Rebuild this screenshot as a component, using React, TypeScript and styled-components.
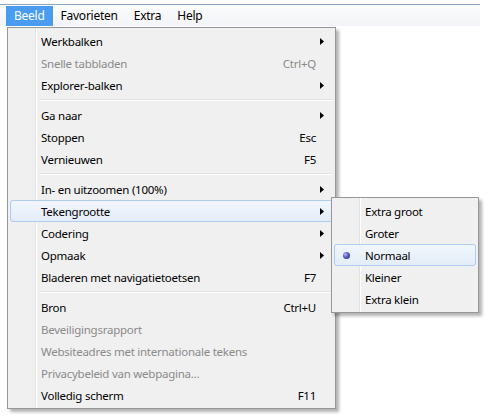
import React from 'react';
import styled, { createGlobalStyle, css } from 'styled-components';

const GlobalStyle = createGlobalStyle`
  html, body {
    margin: 0;
    padding: 0;
    background: #ffffff;
  }
  body {
    font-family: "Noto Sans", "Liberation Sans", sans-serif;
    font-size: 11.5px;
    letter-spacing: -0.25px;
    color: #000;
  }
`;

const Page = styled.div`
  position: relative;
  width: 488px;
  height: 420px;
  overflow: hidden;
  background: #fff;
  padding-top: 4px;
  box-sizing: border-box;
`;

const MenuBar = styled.div`
  display: flex;
  align-items: flex-end;
  width: 480px;
  height: 22px;
  box-sizing: border-box;
  padding-left: 6px;
  border-top: 1px solid #8ea6c4;
  background: linear-gradient(to bottom, #fbfcfd 0%, #f2f4f7 100%);
`;

const MenuTitle = styled.div<{ $active?: boolean }>`
  height: 20px;
  line-height: 20px;
  padding: 0 8px;
  font-size: 12px;
  color: #000;
  ${(p) =>
    p.$active &&
    css`
      background: #4a9cf0;
      color: #fff;
    `}
`;

const Dropdown = styled.div<{ $left: number; $top: number; $width: number }>`
  position: absolute;
  left: ${(p) => p.$left}px;
  top: ${(p) => p.$top}px;
  width: ${(p) => p.$width}px;
  box-sizing: border-box;
  padding: 2px;
  border: 1px solid #979797;
  background-color: #f0f0f0;
  background-image: linear-gradient(
    to right,
    transparent 27px,
    #e2e3e3 27px,
    #e2e3e3 28px,
    #ffffff 28px,
    #ffffff 29px,
    transparent 29px
  );
  box-shadow: 3px 3px 3px rgba(0, 0, 0, 0.3);
`;

const Row = styled.div<{ $disabled?: boolean; $hot?: boolean }>`
  display: grid;
  grid-template-columns: 30px 1fr auto 16px;
  align-items: center;
  height: 22px;
  box-sizing: border-box;
  border: 1px solid transparent;
  border-radius: 3px;
  color: ${(p) => (p.$disabled ? '#8a8a8a' : '#000')};
  white-space: nowrap;
  ${(p) =>
    p.$hot &&
    css`
      border-color: #aecbf0;
      background: linear-gradient(to bottom, #f1f6fc 0%, #e3ecf8 100%);
    `}
`;

const Gutter = styled.span`
  display: flex;
  align-items: center;
  padding-left: 8px;
`;

const Shortcut = styled.span`
  text-align: right;
`;

const ArrowCell = styled.span`
  display: flex;
  align-items: center;
  padding-left: 4px;
`;

const Separator = styled.div`
  height: 8px;
  margin-left: 30px;
  display: flex;
  align-items: center;
  &::before {
    content: '';
    flex: 1;
    height: 1px;
    background: #e2e3e3;
    border-bottom: 1px solid #ffffff;
  }
`;

const RadioDot = styled.span`
  width: 7px;
  height: 7px;
  border-radius: 50%;
  background: radial-gradient(circle at 35% 35%, #b9bdf0 0%, #5458c4 45%, #262a8a 100%);
`;

const Arrow = () => (
  <svg width="4" height="7" viewBox="0 0 4 7">
    <path d="M0 0 L4 3.5 L0 7 Z" fill="#000" />
  </svg>
);

type Item =
  | { sep: true }
  | {
      sep?: false;
      label: string;
      shortcut?: string;
      sub?: boolean;
      disabled?: boolean;
      hot?: boolean;
      radio?: boolean;
    };

const mainItems: Item[] = [
  { label: 'Werkbalken', sub: true },
  { label: 'Snelle tabbladen', shortcut: 'Ctrl+Q', disabled: true },
  { label: 'Explorer-balken', sub: true },
  { sep: true },
  { label: 'Ga naar', sub: true },
  { label: 'Stoppen', shortcut: 'Esc' },
  { label: 'Vernieuwen', shortcut: 'F5' },
  { sep: true },
  { label: 'In- en uitzoomen (100%)', sub: true },
  { label: 'Tekengrootte', sub: true, hot: true },
  { label: 'Codering', sub: true },
  { label: 'Opmaak', sub: true },
  { label: 'Bladeren met navigatietoetsen', shortcut: 'F7' },
  { sep: true },
  { label: 'Bron', shortcut: 'Ctrl+U' },
  { label: 'Beveiligingsrapport', disabled: true },
  { label: 'Websiteadres met internationale tekens', disabled: true },
  { label: 'Privacybeleid van webpagina...', disabled: true },
  { label: 'Volledig scherm', shortcut: 'F11' },
];

const sizeItems: Item[] = [
  { label: 'Extra groot' },
  { label: 'Groter' },
  { label: 'Normaal', radio: true, hot: true },
  { label: 'Kleiner' },
  { label: 'Extra klein' },
];

const MenuList: React.FC<{ items: Item[] }> = ({ items }) => (
  <>
    {items.map((it, i) =>
      it.sep ? (
        <Separator key={i} />
      ) : (
        <Row key={i} $disabled={it.disabled} $hot={it.hot}>
          <Gutter>{it.radio && <RadioDot />}</Gutter>
          <span>{it.label}</span>
          <Shortcut>{it.shortcut}</Shortcut>
          <ArrowCell>{it.sub && <Arrow />}</ArrowCell>
        </Row>
      )
    )}
  </>
);

const App: React.FC = () => (
  <Page>
    <GlobalStyle />
    <MenuBar>
      <MenuTitle $active>Beeld</MenuTitle>
      <MenuTitle>Favorieten</MenuTitle>
      <MenuTitle>Extra</MenuTitle>
      <MenuTitle>Help</MenuTitle>
    </MenuBar>
    <Dropdown $left={7} $top={27} $width={329}>
      <MenuList items={mainItems} />
    </Dropdown>
    <Dropdown $left={331} $top={197} $width={148}>
      <MenuList items={sizeItems} />
    </Dropdown>
  </Page>
);

export default App;
